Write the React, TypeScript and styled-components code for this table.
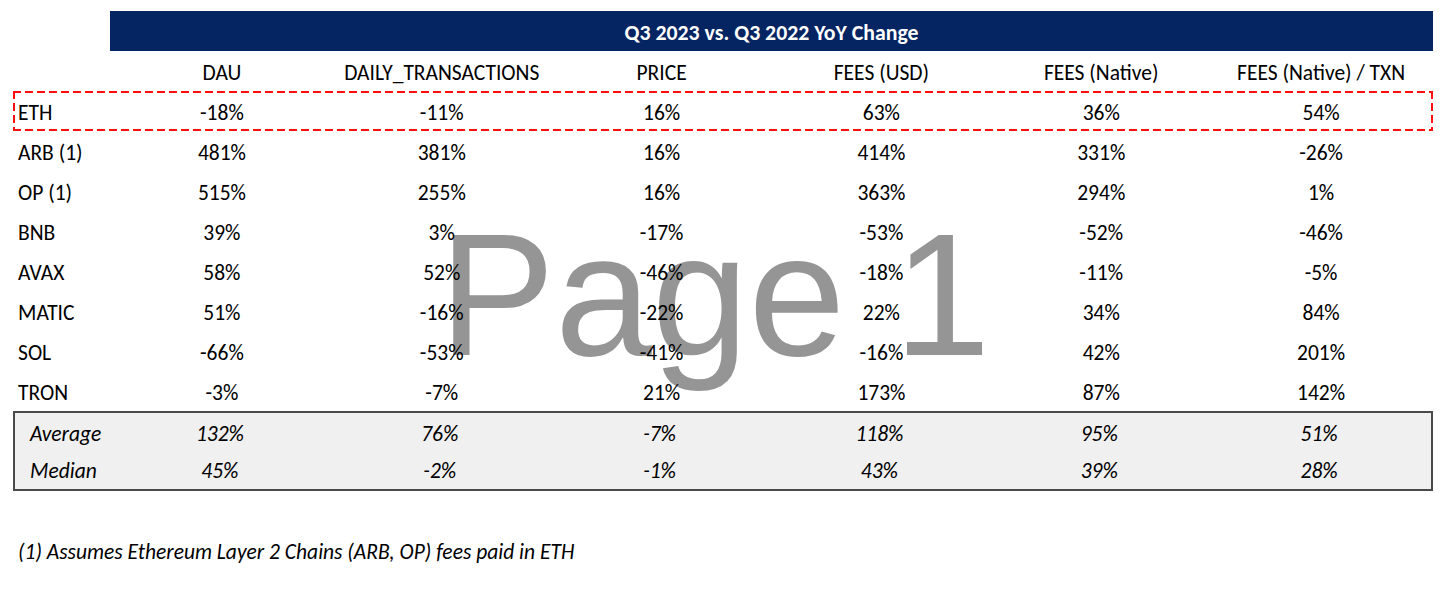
import * as React from 'react';
import styled, { createGlobalStyle, css } from 'styled-components';

const GlobalStyle = createGlobalStyle`
  body {
    margin: 0;
    background: #ffffff;
    font-family: Carlito, Lato, "Open Sans", sans-serif;
    color: #000000;
  }
`;

const Page = styled.div`
  position: relative;
  width: 1456px;
  height: 591px;
  padding-top: 11px;
  box-sizing: border-box;
  overflow: hidden;
`;

const Watermark = styled.div`
  position: absolute;
  left: 439px;
  top: 208px;
  font-family: "Liberation Sans", Arial, sans-serif;
  font-size: 174px;
  line-height: 1;
  color: #959595;
  white-space: nowrap;
  pointer-events: none;
`;

const Content = styled.div`
  position: relative;
  margin-left: 13px;
  width: 1420px;
`;

const TitleBar = styled.div`
  margin-left: 97px;
  height: 40px;
  background: #042462;
  color: #ffffff;
  font-weight: bold;
  font-size: 21.8px;
  display: flex;
  align-items: center;
  justify-content: center;
  padding-top: 2px;
  box-sizing: border-box;
`;

const dash = '#ff1010';

const Row = styled.div<{ $dashed?: boolean }>`
  display: grid;
  grid-template-columns: 97px repeat(6, 1fr);
  height: 40px;
  align-items: center;
  box-sizing: border-box;
  padding: 3px 2px 0;
  ${(p) =>
    p.$dashed &&
    css`
      background:
        repeating-linear-gradient(90deg, ${dash} 0 8px, transparent 8px 12px) top left / 100% 2px no-repeat,
        repeating-linear-gradient(90deg, ${dash} 0 8px, transparent 8px 12px) bottom left / 100% 2px no-repeat,
        repeating-linear-gradient(180deg, ${dash} 0 8px, transparent 8px 12px) top left / 2px 100% no-repeat,
        repeating-linear-gradient(180deg, ${dash} 0 8px, transparent 8px 12px) top right / 2px 100% no-repeat;
    `}
`;

const SummaryBox = styled.div`
  border: 2px solid #4a4a4a;
  background: #f0f0f0;
  box-sizing: border-box;
  height: 80px;
  display: flex;
  flex-direction: column;
  justify-content: center;
  padding-top: 2px;
`;

const SummaryRow = styled.div`
  display: grid;
  grid-template-columns: 95px repeat(6, 1fr);
  height: 38.5px;
  align-items: center;
  font-style: italic;
  padding-right: 2px;
`;

const Label = styled.div<{ $indent?: boolean }>`
  font-size: 21.5px;
  padding-left: ${(p) => (p.$indent ? '15px' : '3px')};
  white-space: nowrap;
`;

const Cell = styled.div`
  font-size: 21.5px;
  text-align: center;
  white-space: nowrap;
`;

const Footnote = styled.div`
  margin-top: 48px;
  padding-left: 5px;
  font-size: 21.5px;
  font-style: italic;
`;

const columns = [
  'DAU',
  'DAILY_TRANSACTIONS',
  'PRICE',
  'FEES (USD)',
  'FEES (Native)',
  'FEES (Native) / TXN',
];

const rows: [string, string[]][] = [
  ['ETH', ['-18%', '-11%', '16%', '63%', '36%', '54%']],
  ['ARB (1)', ['481%', '381%', '16%', '414%', '331%', '-26%']],
  ['OP (1)', ['515%', '255%', '16%', '363%', '294%', '1%']],
  ['BNB', ['39%', '3%', '-17%', '-53%', '-52%', '-46%']],
  ['AVAX', ['58%', '52%', '-46%', '-18%', '-11%', '-5%']],
  ['MATIC', ['51%', '-16%', '-22%', '22%', '34%', '84%']],
  ['SOL', ['-66%', '-53%', '-41%', '-16%', '42%', '201%']],
  ['TRON', ['-3%', '-7%', '21%', '173%', '87%', '142%']],
];

const summary: [string, string[]][] = [
  ['Average', ['132%', '76%', '-7%', '118%', '95%', '51%']],
  ['Median', ['45%', '-2%', '-1%', '43%', '39%', '28%']],
];

export default () => {
  return (
    <Page>
      <GlobalStyle />
      <Watermark>Page 1</Watermark>
      <Content>
        <TitleBar>Q3 2023 vs. Q3 2022 YoY Change</TitleBar>
        <Row>
          <Label />
          {columns.map((c) => (
            <Cell key={c}>{c}</Cell>
          ))}
        </Row>
        {rows.map(([name, vals], i) => (
          <Row key={name} $dashed={i === 0}>
            <Label>{name}</Label>
            {vals.map((v, j) => (
              <Cell key={j}>{v}</Cell>
            ))}
          </Row>
        ))}
        <SummaryBox>
          {summary.map(([name, vals]) => (
            <SummaryRow key={name}>
              <Label $indent>{name}</Label>
              {vals.map((v, j) => (
                <Cell key={j}>{v}</Cell>
              ))}
            </SummaryRow>
          ))}
        </SummaryBox>
        <Footnote>(1) Assumes Ethereum Layer 2 Chains (ARB, OP) fees paid in ETH</Footnote>
      </Content>
    </Page>
  );
};
